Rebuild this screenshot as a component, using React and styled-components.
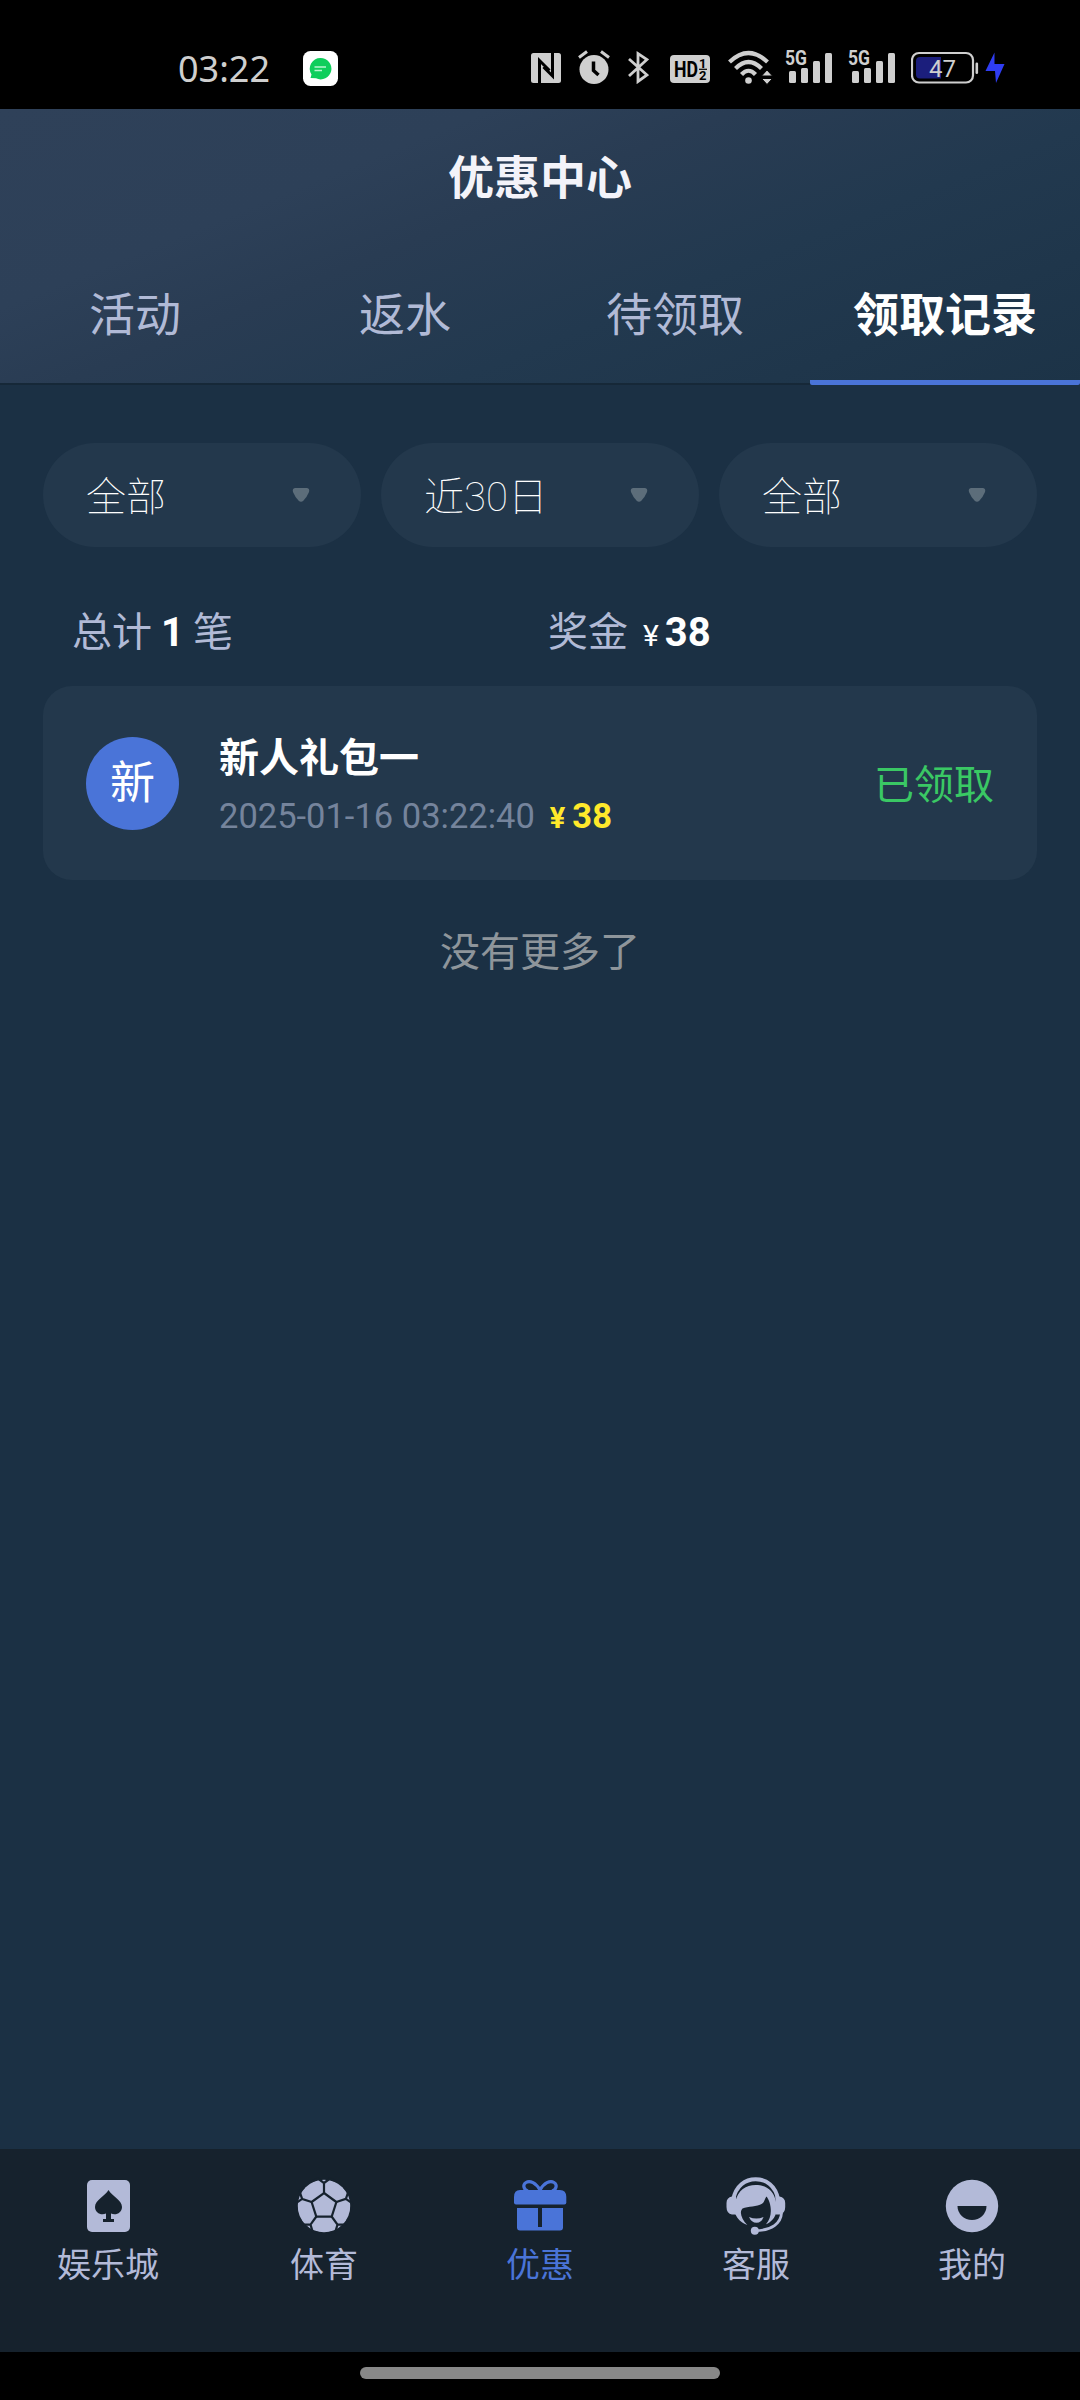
import styled, { createGlobalStyle } from "styled-components";

const GlobalStyle = createGlobalStyle`
    * {
        box-sizing: border-box;
    }
    body {
        margin: 0;
        background-color: #000;
        font-family: Roboto, "Noto Sans CJK SC", sans-serif;
    }
    svg {
        display: block;
        flex-shrink: 0;
    }
`;
const Page = styled.div`
    display: flex;
    flex-direction: column;
    width: 1080px;
    height: 2400px;
    overflow: hidden;
    background-color: #1b3044;
`;
const StatusBar = styled.div`
    display: flex;
    align-items: center;
    height: 109px;
    flex-shrink: 0;
    padding: 25px 75px 0 178px;
    background-color: #000;
    color: #cfcfcf;
`;
const Clock = styled.span`
    width: 125px;
    margin-top: 3px;
    font-family: "Noto Sans", sans-serif;
    font-size: 36px;
    line-height: 40px;
`;
const AppBadge = styled.svg`
    margin-top: 3px;
`;
const StatusIcons = styled.div`
    display: flex;
    align-items: center;
    margin-left: auto;
`;
const StatusIcon = styled.svg`
    margin-left: ${(props) => props.$gap || 0}px;
    fill: currentColor;
`;
const Header = styled.div`
    display: flex;
    flex-direction: column;
    height: 276px;
    flex-shrink: 0;
    border-bottom: 2px solid #162838;
    background: linear-gradient(158deg, #2f4159 0%, #2d4058 28%, #293c53 42%, #22394f 64%, #1c3347 100%);
`;
const Title = styled.h1`
    margin: 0;
    padding-top: 35px;
    font-size: 46px;
    font-weight: 700;
    line-height: 68px;
    text-align: center;
    color: #f3f3f9;
`;
const Tabs = styled.div`
    display: grid;
    grid-template-columns: repeat(4, 1fr);
    flex: 1;
    margin-top: 34px;
    margin-bottom: -2px;
`;
const Tab = styled.div`
    display: flex;
    justify-content: center;
    padding-top: 35px;
    font-size: 46px;
    line-height: 68px;
    white-space: nowrap;
    font-weight: ${(props) => (props.$active ? 700 : 400)};
    color: ${(props) => (props.$active ? "#fff" : "#b1bad6")};
    background: ${(props) => (props.$active ? "linear-gradient(#4a74d8, #4a74d8) bottom / 100% 5px no-repeat" : "none")};
    border-radius: 2px;
`;
const Content = styled.div`
    flex: 1;
    padding: 58px 43px 0;
`;
const Filters = styled.div`
    display: grid;
    grid-template-columns: repeat(3, 1fr);
    gap: 20px;
`;
const Filter = styled.div`
    display: flex;
    align-items: center;
    justify-content: space-between;
    height: 104px;
    padding: 0 51px 0 43px;
    border-radius: 52px;
    background-color: #23384c;
    color: #fff;
    font-size: 40px;
    font-weight: 100;
`;
const FilterText = styled.span`
    padding-bottom: 2px;
`;
const Totals = styled.div`
    display: grid;
    grid-template-columns: 476px 1fr;
    height: 139px;
    padding: 56px 29px 0;
    font-size: 40px;
    line-height: 60px;
    color: #b1bad6;
`;
const Total = styled.div`
    display: flex;
    align-items: baseline;
`;
const TotalNumber = styled.b`
    margin: 0 9px;
    font-weight: 700;
    color: #fff;
`;
const Yen = styled.span`
    margin-left: 15px;
    margin-right: -3px;
    font-size: 30px;
    color: #fff;
`;
const Record = styled.div`
    display: flex;
    align-items: center;
    height: 194px;
    padding: 0 43px;
    border-radius: 29px;
    background-color: #23384c;
`;
const Avatar = styled.div`
    width: 93px;
    height: 93px;
    border-radius: 50%;
    background-color: #4a74d8;
    color: #fff;
    font-size: 45px;
    line-height: 93px;
    text-align: center;
`;
const RecordBody = styled.div`
    flex: 1;
    padding-top: 8px;
    padding-left: 40px;
`;
const RecordTitle = styled.div`
    font-size: 40px;
    font-weight: 700;
    line-height: 60px;
    color: #fff;
`;
const RecordInfo = styled.div`
    display: flex;
    align-items: baseline;
    font-size: 34.5px;
    line-height: 54px;
    color: #75849c;
`;
const Amount = styled.span`
    margin-left: 15px;
    font-weight: 700;
    color: #ffe92b;
`;
const AmountYen = styled.span`
    margin-right: 7px;
    font-size: 29px;
`;
const RecordState = styled.div`
    padding-top: 6px;
    font-size: 40px;
    line-height: 60px;
    color: #3ac864;
`;
const NoMore = styled.p`
    margin: 43px 0 0;
    font-size: 40px;
    line-height: 60px;
    text-align: center;
    color: #8e959b;
`;
const NavBar = styled.nav`
    display: grid;
    grid-template-columns: repeat(5, 1fr);
    height: 203px;
    flex-shrink: 0;
    background-color: #16222d;
`;
const NavItem = styled.div`
    display: flex;
    flex-direction: column;
    align-items: center;
    padding-top: 27px;
    font-size: 34px;
    line-height: 50px;
    color: ${(props) => (props.$active ? "#4a74d8" : "#b3bad8")};
`;
const NavIcon = styled.svg`
    width: 60px;
    height: 60px;
    margin-bottom: 4px;
    fill: currentColor;
`;
const HomeArea = styled.div`
    display: flex;
    justify-content: center;
    height: 48px;
    flex-shrink: 0;
    padding-top: 15px;
    background-color: #000;
`;
const HomeBar = styled.div`
    width: 360px;
    height: 12px;
    border-radius: 6px;
    background-color: #888;
`;

const NAV_BG = "#16222d";

const Signal = ({ gap }) => (
    <StatusIcon $gap={gap} width="50" height="46" viewBox="-3 -6 50 46">
        <text x="-1" y="15" fontFamily="Roboto" fontSize="20.500" fontWeight="700" textLength="22" lengthAdjust="spacingAndGlyphs">5G</text>
        <rect x="3" y="21" width="7" height="12" rx="1.500" />
        <rect x="15" y="18" width="7" height="15" rx="1.500" />
        <rect x="27" y="11" width="7" height="22" rx="1.500" />
        <rect x="39" y="3" width="7" height="30" rx="1.500" />
    </StatusIcon>
);

const Caret = () => (
    <svg width="18" height="16" viewBox="0 0 18 16">
        <path d="M3 1H15Q18 1.500 17 5Q15 10 11.500 13.500Q9 16 6.500 13.500Q3 10 1 5Q0 1.500 3 1Z" fill="#5c6d7a" />
    </svg>
);

const CasinoIcon = () => (
    <NavIcon viewBox="0 0 60 60">
        <rect x="9" y="4" width="43" height="52" rx="5" />
        <path d="M30.500 14C34 20 44 24 44 31C44 36.500 38 40 33 37.500V43H36V46H25V43H28V37.500C23 40 17 36.500 17 31C17 24 27 20 30.500 14Z" fill={NAV_BG} />
    </NavIcon>
);

const spokes = [0, 72, 144, 216, 288];
const SportIcon = () => (
    <NavIcon viewBox="0 0 60 60">
        <circle cx="30" cy="30" r="26.300" />
        <g fill="none" stroke={NAV_BG} strokeWidth="2.200">
            <path d="M30 17L42.400 26L37.700 40.700H22.300L17.600 26Z" />
            {spokes.map((angle) => (
                <path key={angle} transform={`rotate(${angle} 30 30)`} d="M30 17V7L24 2.500M30 7L36 2.500M24 2.500L18 5.200M36 2.500L42 5.200" />
            ))}
        </g>
    </NavIcon>
);

const PromoIcon = () => (
    <NavIcon viewBox="0 0 60 60">
        <path d="M30 14C26 7 20 4 16 6.500C12 9 14 14 18 15M30 14C34 7 40 4 44 6.500C48 9 46 14 42 15" fill="none" stroke="currentColor" strokeWidth="3.200" />
        <path d="M10 14H50Q56.300 14 56.300 21V26.500Q56.300 28.500 54.300 28.500H6Q4 28.500 4 26.500V21Q4 14 10 14Z" />
        <path d="M7 32H28V51H32V32H53V51.500Q53 54.500 50 54.500H10Q7 54.500 7 51.500Z" />
    </NavIcon>
);

const ServiceIcon = () => (
    <NavIcon viewBox="0 0 60 60">
        <path d="M7.300 23C10 10 19 3.200 29.700 3.200S49.500 10 52 23" fill="none" stroke="currentColor" strokeWidth="4" />
        <path d="M10 20.500V38.500H6Q.500 37.500 .500 31V27Q.500 21.500 6 20.500ZM49.500 20.500V38.500H53.500Q59.200 37.500 59.200 31V27Q59.200 21.500 53.500 20.500Z" />
        <path d="M21.300 49C15 46.500 11.500 43 9.300 38V26C12 14 20 9 29.700 9S48 14 50 26V37.500C48 43 45 46 40 48.300C43.500 44 45 39 44.800 34C44.700 29 43 23.500 40.500 20.500C39 22 39 25.500 36 27.800C31 31.300 22 30 16.500 32.500C13 36 15.500 43 21.300 49Z" />
        <path d="M23 41Q30.500 44 37.500 41Q35.500 46.800 30.500 46.800T23 41Z" />
        <path d="M55.500 37C55 47 46 54.500 29 54.700" fill="none" stroke="currentColor" strokeWidth="2.800" />
        <circle cx="28.800" cy="54.800" r="4" />
    </NavIcon>
);

const MineIcon = () => (
    <NavIcon viewBox="0 0 60 60">
        <circle cx="30" cy="30" r="26.200" />
        <path d="M15.500 30H44.500A14.500 14 0 0 1 15.500 30Z" fill={NAV_BG} />
    </NavIcon>
);

const tabs = ["活动", "返水", "待领取", "领取记录"];
const filters = ["全部", "近30日", "全部"];
const navItems = [
    { label: "娱乐城", Icon: CasinoIcon },
    { label: "体育", Icon: SportIcon },
    { label: "优惠", Icon: PromoIcon },
    { label: "客服", Icon: ServiceIcon },
    { label: "我的", Icon: MineIcon },
];

const PhoneStatus = () => (
    <StatusBar>
        <Clock>03:22</Clock>
        <AppBadge width="35" height="35" viewBox="0 0 35 35">
            <rect width="35" height="35" rx="7.500" fill="#fff" />
            <path d="M17.500 7A10.700 10.700 0 1 1 13 27.300L7.500 27L8.500 23.500A10.700 10.700 0 0 1 17.500 7Z" fill="#0fce5c" />
            <path d="M11.500 16H23M11.500 19.500H19" stroke="#b9f5d0" strokeWidth="1.300" />
        </AppBadge>
        <StatusIcons>
            <StatusIcon width="30" height="34" viewBox="0 0 30 34">
                <rect y="3" width="30" height="30" rx="2.500" />
                <path d="M8.500 33V10.500L18.500 20.500M21.500 3V26L12.500 17" fill="none" stroke="#000" strokeWidth="3" />
            </StatusIcon>
            <StatusIcon $gap="17" width="32" height="34" viewBox="0 0 32 34">
                <circle cx="16" cy="19.500" r="14.500" />
                <path d="M1 7.500L9 1.500M31 7.500L23 1.500" stroke="#000" strokeWidth="6" />
                <path d="M1 7.500L9 1.500M31 7.500L23 1.500" stroke="currentColor" strokeWidth="3" />
                <path d="M15.500 11.500V20.500L20.500 25" fill="none" stroke="#000" strokeWidth="3.500" />
            </StatusIcon>
            <StatusIcon $gap="17" width="22" height="34" viewBox="0 0 22 34">
                <path d="M2 9L20 25L11 31.500V3.500L20 9.500L2 26" fill="none" stroke="currentColor" strokeWidth="2.800" />
            </StatusIcon>
            <StatusIcon $gap="21" width="40" height="34" viewBox="0 0 40 34">
                <rect y="5" width="40" height="28" rx="4" />
                <g fill="#000" fontFamily="Roboto" fontWeight="700">
                    <text x="4" y="27" fontSize="22.500" textLength="24" lengthAdjust="spacingAndGlyphs">HD</text>
                    <text x="29" y="17.800" fontSize="13">1</text>
                    <text x="29" y="30.200" fontSize="13">2</text>
                </g>
                <path d="M29 19.300H37" stroke="#000" strokeWidth="1.200" />
            </StatusIcon>
            <StatusIcon $gap="18" width="46" height="35" viewBox="0 0 46 35">
                <g fill="none" stroke="currentColor" strokeWidth="4.200">
                    <path d="M1.500 12Q20.500 -6 39.500 12" />
                    <path d="M7.500 18.500Q20.500 5.500 33.500 18.500" />
                    <path d="M13.500 24.500Q20.500 17 27.500 24.500" />
                </g>
                <circle cx="20.500" cy="30.500" r="3.300" />
                <path d="M39 20L44.500 26H33.500ZM39 34.500L33.500 28.500H44.500Z" stroke="#000" strokeWidth="1" />
            </StatusIcon>
            <Signal gap="9" />
            <Signal gap="13" />
            <StatusIcon $gap="15" width="68" height="34" viewBox="0 0 68 34">
                <rect x="1" y="3" width="61" height="29.500" rx="7" fill="none" stroke="currentColor" strokeWidth="2.200" />
                <path d="M9 7H30V28.500H9Q5 28.500 5 24.500V11Q5 7 9 7Z" fill="#1b1e7c" />
                <rect x="64.500" y="12.500" width="2.600" height="11.500" rx="1.300" />
                <text x="18" y="26.500" fontFamily="Roboto" fontSize="24">47</text>
            </StatusIcon>
            <StatusIcon $gap="6" width="20" height="34" viewBox="0 0 20 34">
                <path d="M9.500 2.500V14H19.500L11 33L10 21H.500Z" fill="#2f3df2" />
            </StatusIcon>
        </StatusIcons>
    </StatusBar>
);

export default function App() {
    return (
        <>
            <GlobalStyle />
            <Page>
                <PhoneStatus />
                <Header>
                    <Title>优惠中心</Title>
                    <Tabs>
                        {tabs.map((tab) => (
                            <Tab key={tab} $active={tab === "领取记录"}>{tab}</Tab>
                        ))}
                    </Tabs>
                </Header>
                <Content>
                    <Filters>
                        {filters.map((text, i) => (
                            <Filter key={i}>
                                <FilterText>{text}</FilterText>
                                <Caret />
                            </Filter>
                        ))}
                    </Filters>
                    <Totals>
                        <Total>总计<TotalNumber>1</TotalNumber>笔</Total>
                        <Total>奖金<Yen>¥</Yen><TotalNumber>38</TotalNumber></Total>
                    </Totals>
                    <Record>
                        <Avatar>新</Avatar>
                        <RecordBody>
                            <RecordTitle>新人礼包一</RecordTitle>
                            <RecordInfo>
                                2025-01-16 03:22:40
                                <Amount><AmountYen>¥</AmountYen>38</Amount>
                            </RecordInfo>
                        </RecordBody>
                        <RecordState>已领取</RecordState>
                    </Record>
                    <NoMore>没有更多了</NoMore>
                </Content>
                <NavBar>
                    {navItems.map(({ label, Icon }) => (
                        <NavItem key={label} $active={label === "优惠"}>
                            <Icon />
                            {label}
                        </NavItem>
                    ))}
                </NavBar>
                <HomeArea>
                    <HomeBar />
                </HomeArea>
            </Page>
        </>
    );
}
